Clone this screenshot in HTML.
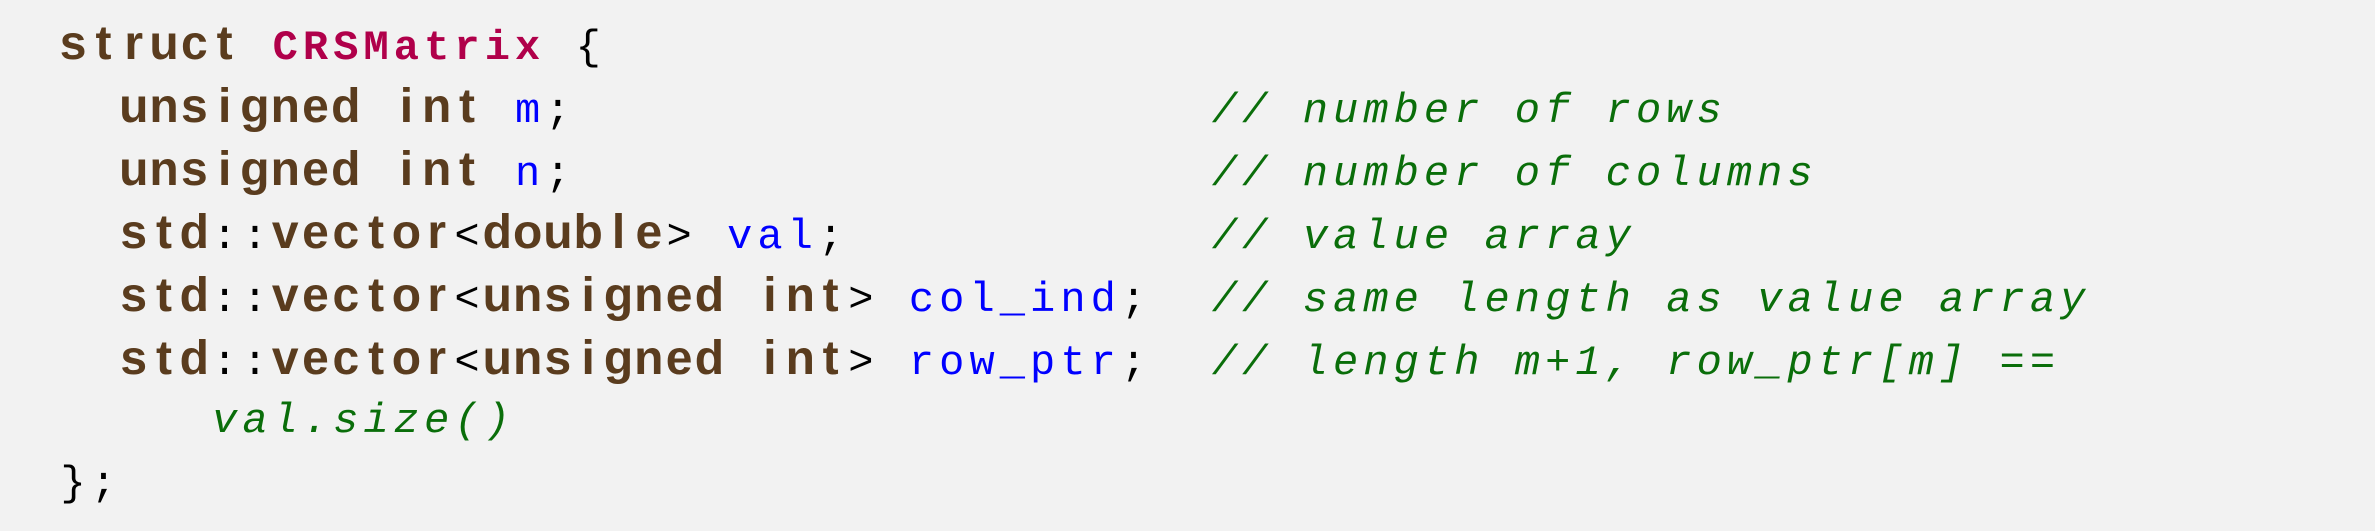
<!DOCTYPE html>
<html><head><meta charset="utf-8">
<style>
html,body{margin:0;padding:0;background:#f2f2f2;width:2375px;height:531px;overflow:hidden}
.code{position:absolute;left:58px;top:-5px}
.l{position:absolute;left:0;white-space:pre;height:63px;line-height:63px;font-family:"Liberation Mono",monospace;font-size:42px}
.c{display:inline-block;width:30.3px;text-align:center;line-height:63px;vertical-align:baseline}
.k{font-family:"Liberation Sans",sans-serif;font-weight:bold;font-size:48px;color:#5a3c1e}
.t{font-family:"Liberation Mono",monospace;font-weight:bold;color:#b0004a}
.i{color:#0000ff}
.p{color:#000}
.m{color:#0a6e0a;font-style:italic}
</style></head><body>
<div class="code">
<div class="l" style="top:17px"><span class="k">struct</span> <span class="t">CRSMatrix</span> <span class="p">{</span></div>
<div class="l" style="top:80px">  <span class="k">unsigned</span> <span class="k">int</span> <span class="i">m</span><span class="p">;</span>                     <span class="m">// number of rows</span></div>
<div class="l" style="top:143px">  <span class="k">unsigned</span> <span class="k">int</span> <span class="i">n</span><span class="p">;</span>                     <span class="m">// number of columns</span></div>
<div class="l" style="top:206px">  <span class="k">std</span><span class="p">::</span><span class="k">vector</span><span class="p">&lt;</span><span class="k">double</span><span class="p">&gt;</span> <span class="i">val</span><span class="p">;</span>            <span class="m">// value array</span></div>
<div class="l" style="top:269px">  <span class="k">std</span><span class="p">::</span><span class="k">vector</span><span class="p">&lt;</span><span class="k">unsigned</span> <span class="k">int</span><span class="p">&gt;</span> <span class="i">col_ind</span><span class="p">;</span>  <span class="m">// same length as value array</span></div>
<div class="l" style="top:332px">  <span class="k">std</span><span class="p">::</span><span class="k">vector</span><span class="p">&lt;</span><span class="k">unsigned</span> <span class="k">int</span><span class="p">&gt;</span> <span class="i">row_ptr</span><span class="p">;</span>  <span class="m">// length m+1, row_ptr[m] ==</span></div>
<div class="l" style="top:395px">     <span class="m">val.size()</span></div>
<div class="l" style="top:458px"><span class="p">};</span></div>
</div>
<script>
document.querySelectorAll('.l').forEach(function(line){
  var walker=document.createTreeWalker(line,NodeFilter.SHOW_TEXT,null,false);
  var nodes=[];while(walker.nextNode())nodes.push(walker.currentNode);
  nodes.forEach(function(n){
    var f=document.createDocumentFragment();
    for(var ch of n.nodeValue){var s=document.createElement('span');s.className='c';s.textContent=ch===' '?'\u00a0':ch;f.appendChild(s);}
    n.parentNode.replaceChild(f,n);
  });
});
</script>
</body></html>
